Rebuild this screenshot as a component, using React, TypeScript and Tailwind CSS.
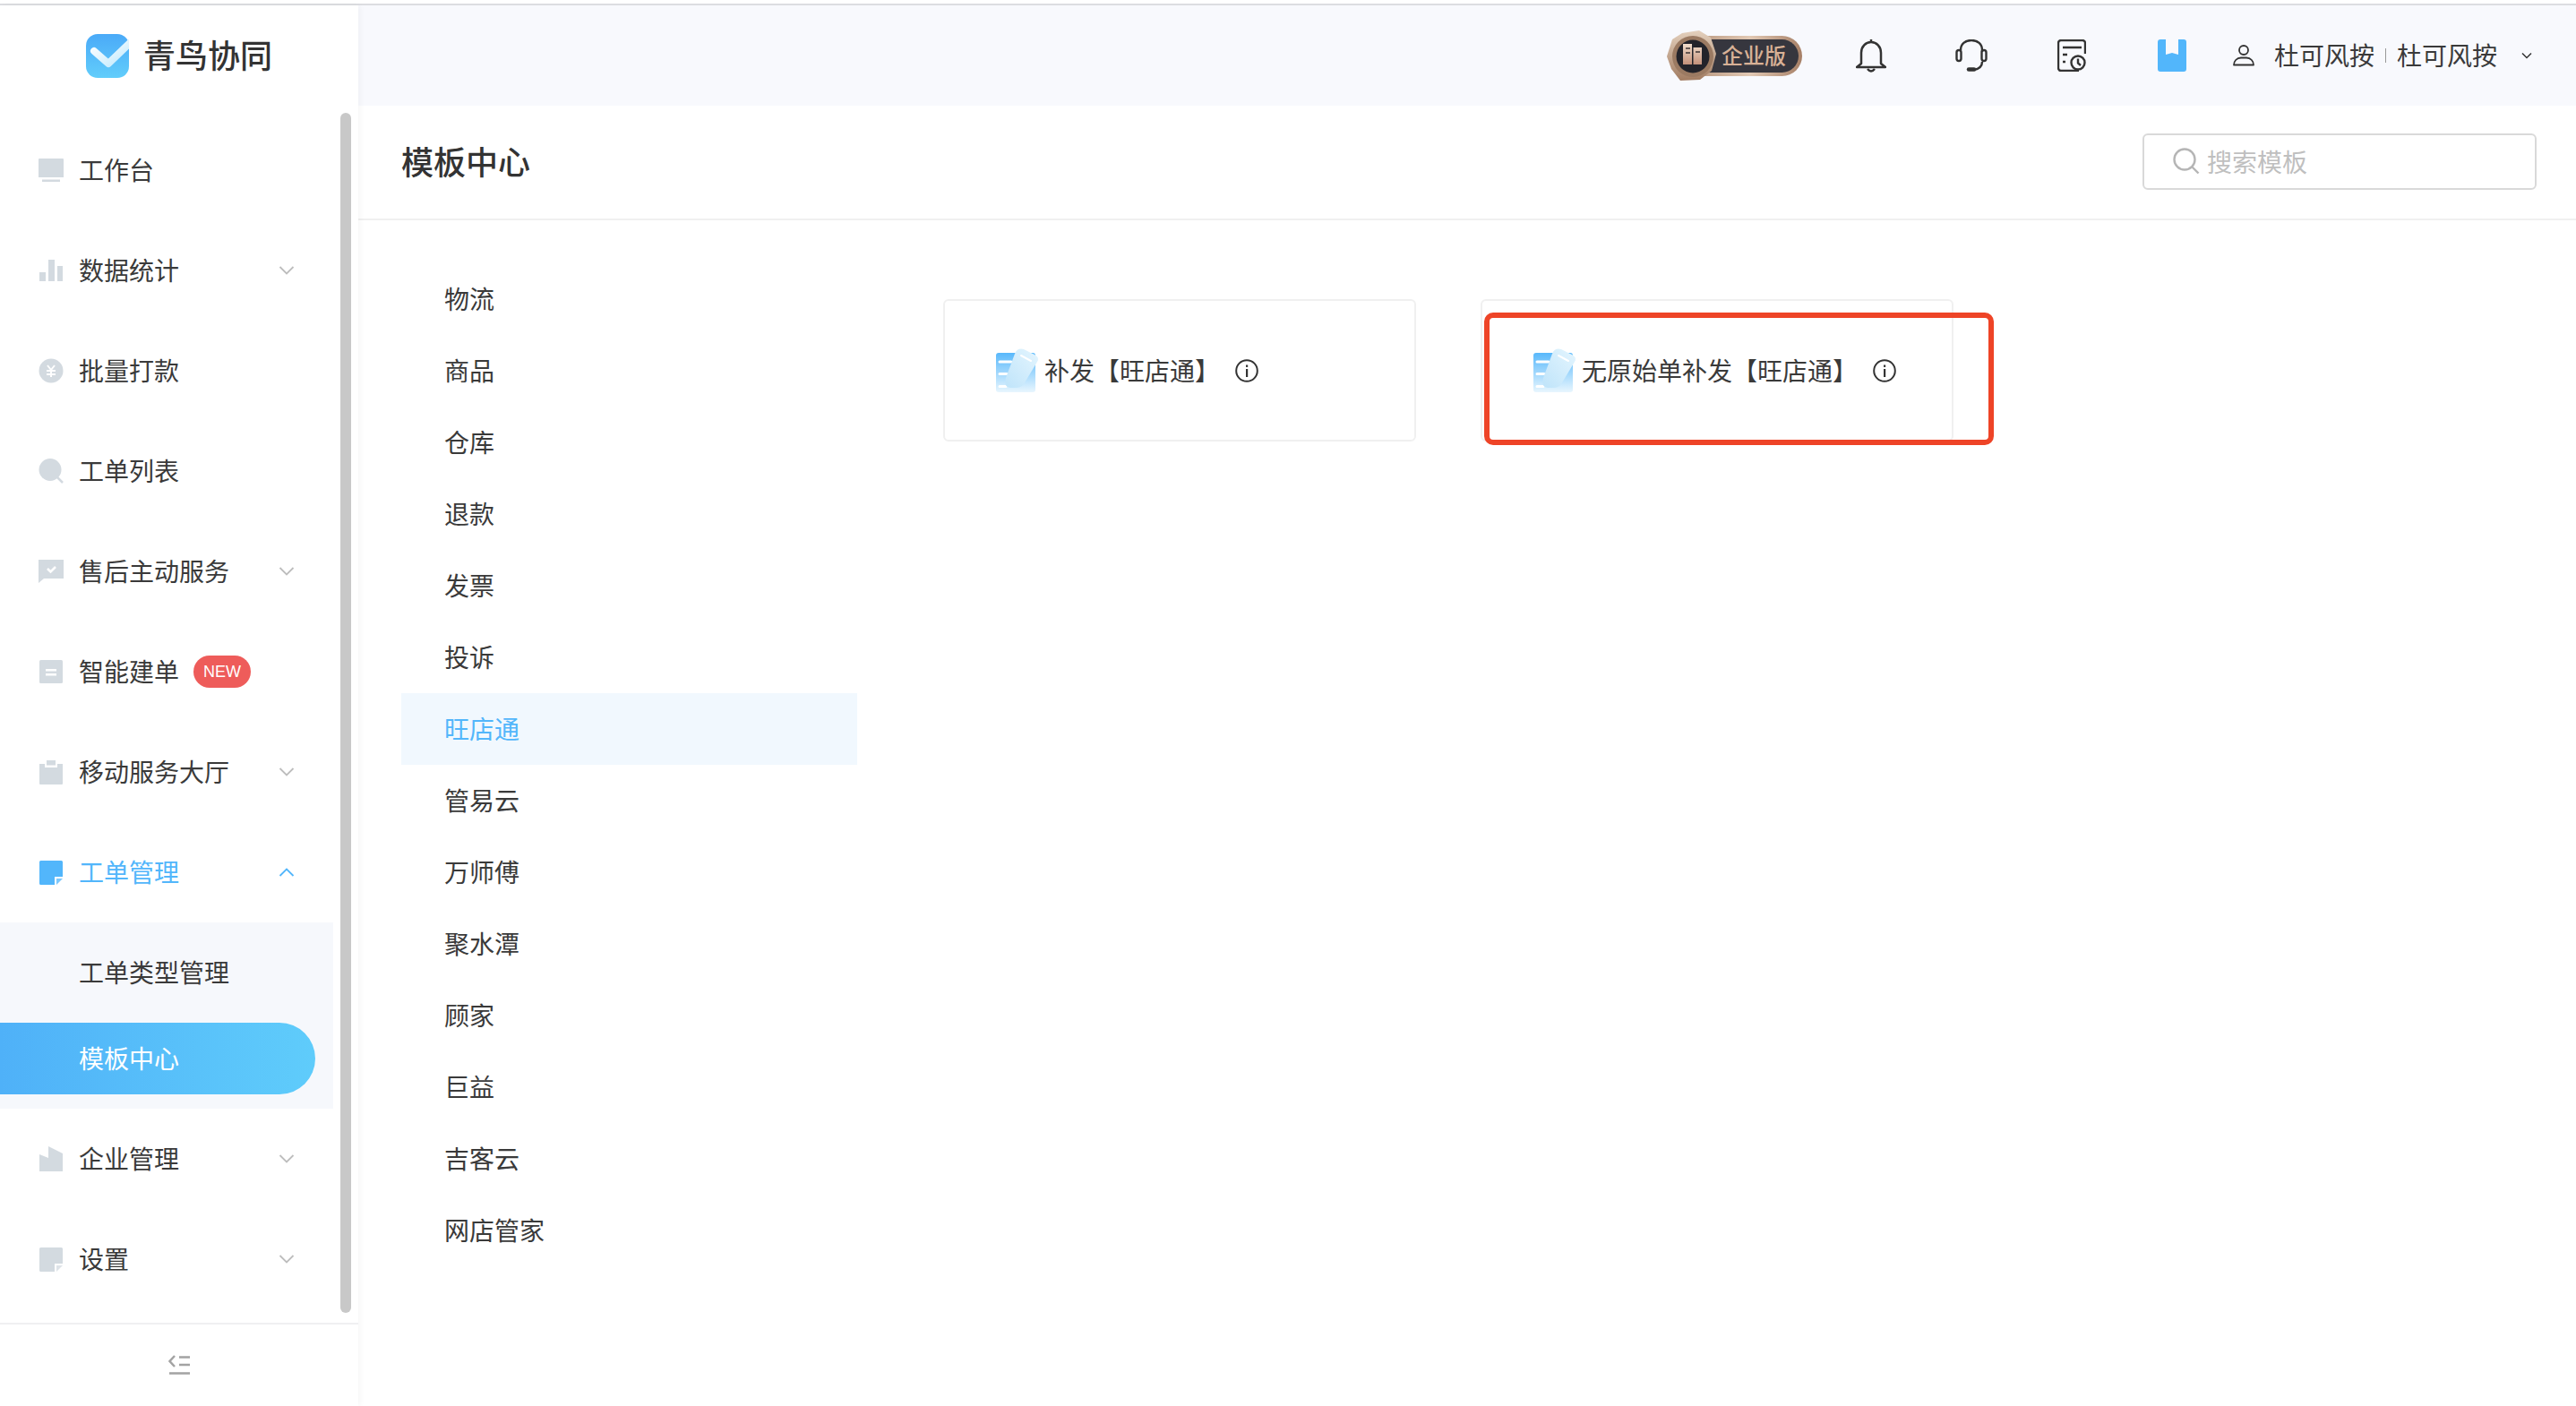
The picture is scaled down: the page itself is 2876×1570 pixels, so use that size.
import type { ReactNode } from "react";

const GRAY = "#d3dae0";
const BLUE = "#52b6fb";

function Chevron({ up, color = "#bdbdbd" }: { up?: boolean; color?: string }) {
  return (
    <svg width="18" height="12" viewBox="0 0 18 12" fill="none">
      <path d={up ? "M1.5 10 9 2.5 16.5 10" : "M1.5 2 9 9.5 16.5 2"} stroke={color} strokeWidth="1.8" />
    </svg>
  );
}

const DeskIcon = () => (
  <svg width="30" height="28" viewBox="0 0 30 28">
    <path d="M1 2a1 1 0 0 1 1-1h26a1 1 0 0 1 1 1v20H1z" fill={GRAY} />
    <rect x="5" y="24.5" width="20" height="2.5" fill={GRAY} />
  </svg>
);
const ChartIcon = () => (
  <svg width="28" height="24" viewBox="0 0 28 24" fill={GRAY}>
    <rect x="1" y="14" width="7" height="10" />
    <rect x="11" y="0" width="7" height="24" />
    <rect x="21" y="7" width="6" height="17" />
  </svg>
);
const YenIcon = () => (
  <svg width="28" height="28" viewBox="0 0 28 28">
    <circle cx="14" cy="14" r="13.5" fill={GRAY} />
    <path d="m10 8 4 5 4-5M9 14h10M9 18h10M14 13v8" stroke="#fff" strokeWidth="2" fill="none" />
  </svg>
);
const SearchSolidIcon = () => (
  <svg width="28" height="28" viewBox="0 0 28 28">
    <circle cx="13" cy="12.500" r="12.500" fill={GRAY} />
    <path d="m21 21 6 6" stroke={GRAY} strokeWidth="2.500" />
  </svg>
);
const ChatIcon = () => (
  <svg width="28" height="26" viewBox="0 0 28 26">
    <path d="M0 0h28v21H6l-6 5z" fill={GRAY} />
    <path d="m10 10 3.500 3.500L19 8" stroke="#fff" strokeWidth="2.500" fill="none" />
  </svg>
);
const FormIcon = () => (
  <svg width="26" height="26" viewBox="0 0 26 26">
    <rect width="26" height="26" rx="1.500" fill={GRAY} />
    <path d="M7 10h12v2.500H7zM7 15h12v2.500H7z" fill="#fff" />
  </svg>
);
const ClipIcon = () => (
  <svg width="26" height="27" viewBox="0 0 26 27">
    <path d="M0 4h6v4h14V4h6v22a1 1 0 0 1-1 1H1a1 1 0 0 1-1-1z" fill={GRAY} />
    <rect x="8" y="0" width="10" height="5.500" fill={GRAY} />
  </svg>
);
const NoteIcon = ({ color }: { color: string }) => (
  <svg width="26" height="27" viewBox="0 0 26 27">
    <path d="M1.500 0h23A1.500 1.500 0 0 1 26 1.500V18h-9v9H1.500A1.500 1.500 0 0 1 0 25.500v-24A1.500 1.500 0 0 1 1.500 0z" fill={color} />
    <path d="M19 20h7l-7 7z" fill={color} opacity="0.75" />
  </svg>
);
const BuildingIcon = () => (
  <svg width="26" height="28" viewBox="0 0 26 28">
    <path d="M0 9l10 4V0l16 8v20H0z" fill={GRAY} />
  </svg>
);

function Logo() {
  return (
    <svg width="48" height="49" viewBox="0 0 48 49">
      <defs>
        <linearGradient id="logo-bg" x1="0" y1="0" x2="0" y2="1">
          <stop offset="0" stopColor="#4aaaf8" />
          <stop offset="1" stopColor="#62cdfb" />
        </linearGradient>
        <linearGradient id="logo-shine" x1="0" y1="0" x2="1" y2="1">
          <stop offset="0" stopColor="#fff" />
          <stop offset="1" stopColor="#bfe9fd" />
        </linearGradient>
      </defs>
      <rect width="48" height="49" rx="13" fill="url(#logo-bg)" />
      <path d="M9 19 25 33 50 9" fill="none" stroke="url(#logo-shine)" strokeWidth="8" strokeLinecap="round" strokeLinejoin="round" />
    </svg>
  );
}

function TemplateIcon({ id }: { id: string }) {
  return (
    <svg width="48" height="49" viewBox="0 0 48 49" className="shrink-0 overflow-visible">
      <defs>
        <linearGradient id={`${id}-a`} x1="0" y1="0" x2="0" y2="1">
          <stop offset="0" stopColor="#58b8fb" />
          <stop offset="1" stopColor="#e8f6fe" />
        </linearGradient>
        <linearGradient id={`${id}-b`} x1="1" y1="0" x2="0" y2="1">
          <stop offset="0" stopColor="#e4f5fe" />
          <stop offset="1" stopColor="#bfe4fa" />
        </linearGradient>
      </defs>
      <rect x="0" y="5" width="44" height="44" rx="3" fill={`url(#${id}-a)`} />
      <path d="M4 15h13M4 28.500h8M4 42.500h7" stroke="#fff" strokeWidth="3" strokeLinecap="round" />
      <path d="M21 6q3-7 10-5l12 6q6 3 3 8L31 40q-3 4-9 4h-6q-8-1-5-11z" fill={`url(#${id}-b)`} />
      <path d="M28 8l11 6" stroke="#fff" strokeWidth="2" strokeLinecap="round" />
    </svg>
  );
}

function InfoIcon() {
  return (
    <svg width="26" height="26" viewBox="0 0 26 26" fill="none" className="shrink-0">
      <circle cx="13" cy="13" r="11.800" stroke="#333" strokeWidth="2" />
      <rect x="12" y="11" width="2.200" height="9" fill="#333" />
      <rect x="12" y="6.500" width="2.200" height="2.400" fill="#333" />
    </svg>
  );
}

function EnterpriseBadge() {
  return (
    <div className="relative flex h-[56px] w-[150px] items-center">
      <div className="ml-[20px] h-[45px] w-[130px] rounded-full bg-[linear-gradient(90deg,#b08d75,#e2c9b4_55%,#a67f66)] p-[4px]">
        <div className="flex h-full items-center rounded-full bg-[#36363e] pb-[2px] pl-[36px] text-[24px] font-medium leading-none text-[#d8b196]">
          企业版
        </div>
      </div>
      <svg width="55" height="56" viewBox="0 0 55 56" className="absolute left-[-1px] top-0">
        <defs>
          <linearGradient id="medal" x1="0" y1="0" x2="0" y2="1">
            <stop offset="0" stopColor="#e4d0bd" />
            <stop offset="1" stopColor="#a27c62" />
          </linearGradient>
          <linearGradient id="medal-book" x1="0" y1="0" x2="0" y2="1">
            <stop offset="0" stopColor="#f1dccb" />
            <stop offset="1" stopColor="#c4917a" />
          </linearGradient>
        </defs>
        <path d="M17 3 36 0l13 8 6 18-5 19-13 10-22 1L5 43 0 29 6 10z" fill="url(#medal)" />
        <circle cx="29" cy="29" r="23" fill="#9b7a62" />
        <circle cx="29" cy="29" r="18.500" fill="#23232a" />
        <path d="M18 15h10v23H18zM29.500 19H39v19h-9.500z" fill="url(#medal-book)" />
        <path d="M21 20h5M21 25h5M32 24h5" stroke="#3c3434" strokeWidth="1.500" />
      </svg>
    </div>
  );
}

const BellIcon = () => (
  <svg width="34" height="39" viewBox="0 0 34 39" fill="none" stroke="#333" strokeWidth="2.500">
    <path d="M17 1v3M6 28V16C6 9 11 4 17 4s11 5 11 12v12l5 4H1z" strokeLinejoin="round" />
    <path d="M13 34q4 5 8 0" />
  </svg>
);
const HeadsetIcon = () => (
  <svg width="36" height="36" viewBox="0 0 36 36" fill="none" stroke="#333" strokeWidth="2.400">
    <path d="M6 12C6 5 11 1 18 1s12 4 12 11v2M30 25c0 5-4 8-9 9" />
    <rect x="1.500" y="12" width="5" height="12" rx="2.500" />
    <rect x="29.500" y="12" width="5" height="12" rx="2.500" />
    <path d="M15 33.500h6" strokeWidth="4.500" strokeLinecap="round" />
  </svg>
);
const RecordIcon = () => (
  <svg width="32" height="36" viewBox="0 0 32 36" fill="none" stroke="#333" strokeWidth="2.400">
    <path d="M31 16V4a3 3 0 0 0-3-3H4a3 3 0 0 0-3 3v28a3 3 0 0 0 3 3h20" />
    <path d="M6 9h21M6 17h5M6 25h3" />
    <circle cx="23" cy="26" r="7.500" />
    <path d="M23 21.500v5l3 2.500" />
  </svg>
);
const BookmarkIcon = () => (
  <svg width="32" height="36" viewBox="0 0 32 36">
    <path d="M3 0h6v17l7-2 7 2V0h6a3 3 0 0 1 3 3v30a3 3 0 0 1-3 3H3a3 3 0 0 1-3-3V3a3 3 0 0 1 3-3z" fill={BLUE} />
  </svg>
);
const UserIcon = () => (
  <svg width="24" height="24" viewBox="0 0 24 24" fill="none" stroke="#333" strokeWidth="1.800">
    <circle cx="12" cy="6" r="5" />
    <path d="M1 22.500c0-4 3-8 8-8h6c5 0 8 4 8 8z" strokeLinejoin="round" />
  </svg>
);

function MenuItem({
  icon,
  label,
  expandable,
  active,
  badge,
}: {
  icon: ReactNode;
  label: string;
  expandable?: boolean;
  active?: boolean;
  badge?: string;
}) {
  return (
    <div className="flex h-[112px] items-center pl-[42px] pr-[71px]">
      <div className="flex w-[30px] items-center justify-center">{icon}</div>
      <span className={`mb-[3px] ml-[16px] text-[28px] ${active ? "text-[#52b6fb]" : "text-[#3a3a3a]"}`}>{label}</span>
      {badge && (
        <span className="ml-[16px] flex h-[36px] w-[64px] items-center justify-center rounded-full bg-[#ee5c5a] font-['Liberation_Sans',sans-serif] text-[18px] text-white">
          {badge}
        </span>
      )}
      {expandable && (
        <span className="ml-auto flex">
          <Chevron up={active} color={active ? BLUE : "#bdbdbd"} />
        </span>
      )}
    </div>
  );
}

function Sidebar() {
  return (
    <aside className="relative z-10 flex w-[400px] shrink-0 flex-col bg-white shadow-[2px_0_6px_rgba(0,0,0,0.04)]">
      <div className="flex h-[128px] shrink-0 items-start pl-[96px] pt-[32px]">
        <Logo />
        <span className="ml-[16px] mt-[-4px] text-[36px] font-medium leading-[52px] text-[#333]">青鸟协同</span>
      </div>

      <nav className="relative min-h-0 flex-1">
        <MenuItem icon={<DeskIcon />} label="工作台" />
        <MenuItem icon={<ChartIcon />} label="数据统计" expandable />
        <MenuItem icon={<YenIcon />} label="批量打款" />
        <MenuItem icon={<SearchSolidIcon />} label="工单列表" />
        <MenuItem icon={<ChatIcon />} label="售后主动服务" expandable />
        <MenuItem icon={<FormIcon />} label="智能建单" badge="NEW" />
        <MenuItem icon={<ClipIcon />} label="移动服务大厅" expandable />
        <MenuItem icon={<NoteIcon color={BLUE} />} label="工单管理" expandable active />

        <div className="w-[372px] bg-[#f6f8fc] pb-[16px]">
          <div className="flex h-[112px] items-center pb-[3px] pl-[88px] text-[28px] text-[#3a3a3a]">工单类型管理</div>
          <div className="flex h-[80px] w-[352px] items-center rounded-r-[40px] bg-[linear-gradient(90deg,#4fb1f8,#5fccfb)] pb-[3px] pl-[88px] text-[28px] text-white">
            模板中心
          </div>
        </div>

        <MenuItem icon={<BuildingIcon />} label="企业管理" expandable />
        <MenuItem icon={<NoteIcon color={GRAY} />} label="设置" expandable />

        {/* scrollbar thumb */}
        <div className="absolute right-[8px] top-[-8px] h-[1340px] w-[12px] rounded-full bg-[#c8c8c8]" />
      </nav>

      <div className="flex h-[93px] shrink-0 items-center justify-center border-t-2 border-[#f0f0f2] pb-[2px]">
        <svg width="24" height="22" viewBox="0 0 24 22" fill="none" stroke="#a3a3a3" strokeWidth="2.500">
          <path d="M7 1 1.500 7 7 13M12 2.500h12M12 11h12M1 20.500h23" />
        </svg>
      </div>
    </aside>
  );
}

function Header() {
  return (
    <header className="flex h-[112px] shrink-0 items-center justify-end bg-[#f8f9fd] pr-[49px]">
      <EnterpriseBadge />
      <div className="ml-[21px] flex w-[112px] justify-center"><BellIcon /></div>
      <div className="flex w-[112px] justify-center"><HeadsetIcon /></div>
      <div className="flex w-[112px] justify-center"><RecordIcon /></div>
      <div className="flex w-[112px] justify-center"><BookmarkIcon /></div>
      <div className="ml-[12px]"><UserIcon /></div>
      <span className="mb-[2px] ml-[22px] text-[28px] text-[#3a3a3a]">杜可风按</span>
      <span className="mx-[12px] h-[16px] w-[1px] bg-[#999]" />
      <span className="mb-[2px] text-[28px] text-[#3a3a3a]">杜可风按</span>
      <svg width="12" height="8" viewBox="0 0 12 8" fill="none" stroke="#333" strokeWidth="1.500" className="ml-[27px]">
        <path d="m1 1.500 5 5 5-5" />
      </svg>
    </header>
  );
}

const categories = ["物流", "商品", "仓库", "退款", "发票", "投诉", "旺店通", "管易云", "万师傅", "聚水潭", "顾家", "巨益", "吉客云", "网店管家"];

function TemplateCard({ id, title, marked }: { id: string; title: string; marked?: boolean }) {
  return (
    <div className="relative flex h-[159px] w-[528px] items-center rounded-[6px] border-2 border-[#f0f0f0] pl-[57px]">
      <TemplateIcon id={id} />
      <span className="mb-[2px] ml-[6px] text-[28px] text-[#3a3a3a]">{title}</span>
      <span className="ml-[17px] flex"><InfoIcon /></span>
      {marked && (
        <div className="absolute left-[2px] top-[13px] h-[148px] w-[569px] rounded-[10px] border-[6px] border-[#ee4427]" />
      )}
    </div>
  );
}

export default function App() {
  return (
    <div className="flex h-screen flex-col overflow-hidden bg-white font-['Noto_Sans_CJK_SC','Noto_Sans',sans-serif]">
      <div className="mt-[4px] h-[2px] shrink-0 bg-[#dcdde1]" />
      <div className="flex min-h-0 flex-1">
        <Sidebar />
        <main className="flex min-w-0 flex-1 flex-col">
          <Header />
          <div className="flex h-[128px] shrink-0 items-center justify-between border-b-2 border-[#f0f0f0] pl-[48px] pr-[44px] pb-[2px]">
            <h1 className="mb-[3px] text-[36px] font-medium text-[#333]">模板中心</h1>
            <div className="flex h-[63px] w-[440px] items-center rounded-[6px] border-2 border-[#d9d9d9] pl-[32px] text-[28px] text-[#bfbfbf]">
              <svg width="30" height="30" viewBox="0 0 30 30" fill="none" stroke="#b5b5b5" strokeWidth="2.400">
                <circle cx="13" cy="13" r="11.500" />
                <path d="m21.500 21.500 7 7" />
              </svg>
              <span className="ml-[8px]">搜索模板</span>
            </div>
          </div>

          <div className="flex pl-[48px] pt-[48px]">
            <ul className="w-[509px] shrink-0">
              {categories.map((name) => (
                <li
                  key={name}
                  className={`flex h-[80px] items-center pb-[2px] pl-[48px] text-[28px] ${
                    name === "旺店通" ? "bg-[#f1f8fe] text-[#52b6fb]" : "text-[#3a3a3a]"
                  }`}
                >
                  {name}
                </li>
              ))}
            </ul>
            <div className="ml-[96px] mt-[40px] flex items-start gap-[72px]">
              <TemplateCard id="tpl-a" title="补发【旺店通】" />
              <TemplateCard id="tpl-b" title="无原始单补发【旺店通】" marked />
            </div>
          </div>
        </main>
      </div>
    </div>
  );
}
